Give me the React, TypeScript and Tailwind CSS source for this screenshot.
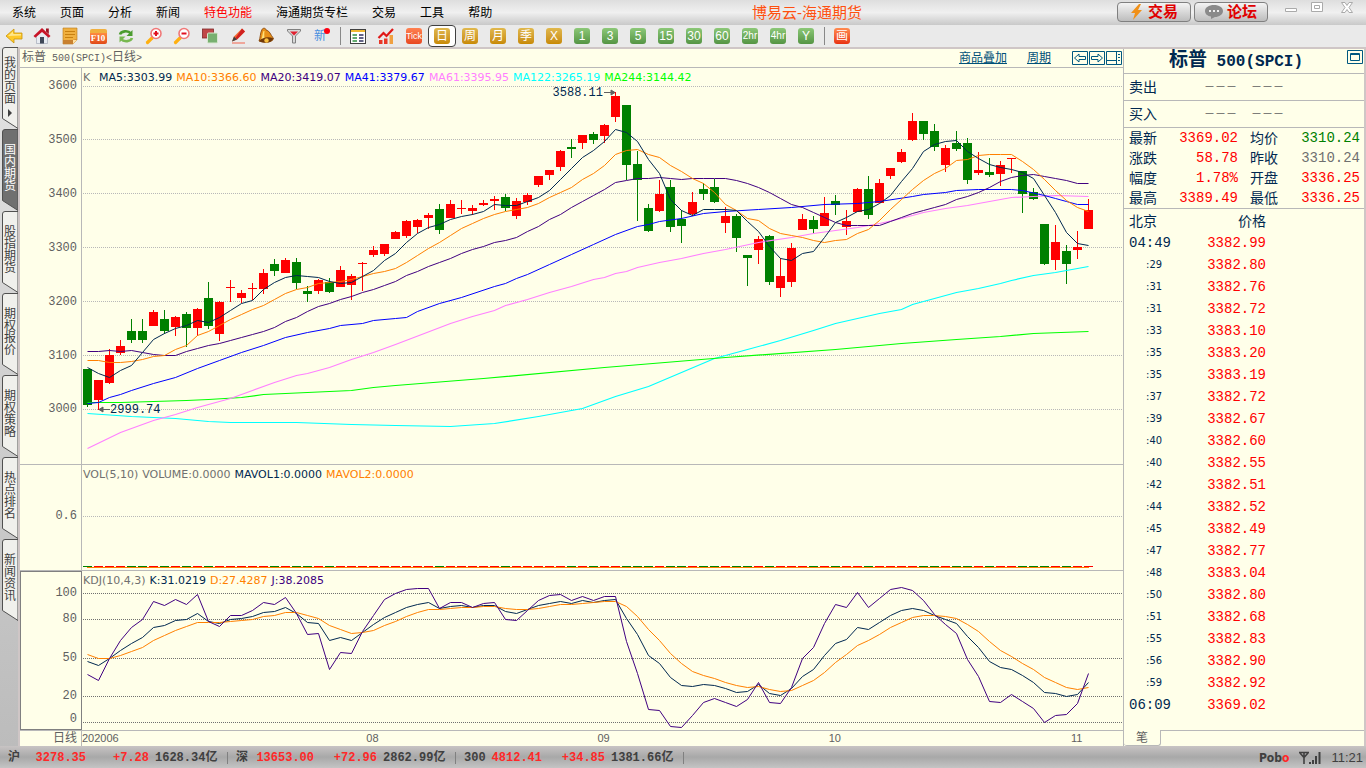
import type { ReactNode } from 'react'
import clsx from 'clsx'

// [up, high, body top, body bottom, low]
type Candle = [number, number, number, number, number]

const candles: Candle[] = [
  [0, 369, 369, 405, 407], [1, 380, 380, 400, 410], [1, 349, 355, 383, 384], [1, 340, 346, 353, 355],
  [0, 319, 331, 340, 343], [0, 319, 331, 340, 343], [1, 310, 312, 326, 326], [0, 310, 319, 331, 334],
  [1, 316, 317, 327, 336], [0, 312, 314, 328, 347], [1, 308, 309, 328, 336], [0, 282, 298, 326, 329],
  [1, 301, 302, 334, 341], [1, 280, 287, 288, 302], [1, 290, 293, 298, 303], [1, 283, 288, 289, 300],
  [1, 269, 273, 289, 294], [0, 259, 264, 271, 276], [1, 258, 260, 273, 273], [0, 258, 262, 283, 289],
  [0, 286, 291, 294, 302], [1, 279, 280, 291, 294], [0, 278, 282, 292, 293], [1, 266, 270, 287, 287],
  [1, 274, 276, 285, 300], [1, 262, 263, 264, 291], [1, 246, 250, 255, 257], [1, 244, 244, 254, 256],
  [1, 231, 232, 239, 239], [1, 220, 221, 236, 238], [1, 219, 220, 227, 233], [1, 213, 215, 218, 229],
  [0, 204, 209, 230, 234], [1, 200, 204, 218, 218], [1, 200, 208, 209, 214], [1, 205, 208, 211, 215],
  [1, 200, 203, 205, 206], [1, 196, 199, 201, 210], [0, 194, 197, 208, 211], [1, 198, 201, 216, 219],
  [1, 193, 195, 202, 205], [1, 176, 176, 185, 187], [1, 170, 170, 175, 180], [1, 150, 151, 167, 171],
  [0, 139, 147, 149, 158], [1, 135, 135, 143, 149], [0, 132, 134, 140, 144], [1, 124, 125, 136, 143],
  [1, 92, 96, 117, 122], [0, 105, 105, 165, 180], [0, 151, 164, 180, 221], [0, 204, 208, 231, 232],
  [1, 180, 194, 211, 212], [0, 180, 187, 227, 232], [0, 210, 219, 226, 243], [1, 192, 202, 214, 216],
  [0, 183, 189, 194, 200], [0, 179, 187, 202, 203], [1, 207, 216, 223, 233], [0, 214, 216, 238, 252],
  [0, 255, 255, 258, 286], [1, 236, 239, 250, 264], [0, 235, 236, 282, 285], [1, 258, 276, 288, 297],
  [1, 243, 248, 282, 287], [1, 214, 219, 230, 230], [0, 216, 220, 229, 233], [1, 197, 213, 226, 226],
  [0, 195, 201, 205, 215], [1, 210, 221, 227, 235], [1, 188, 189, 212, 212], [0, 176, 189, 215, 219],
  [1, 179, 183, 203, 203], [1, 168, 168, 176, 179], [1, 149, 152, 162, 163], [1, 113, 121, 140, 141],
  [0, 121, 121, 134, 140], [0, 124, 131, 147, 151], [1, 145, 148, 165, 172], [0, 131, 143, 149, 151],
  [0, 138, 143, 180, 184], [1, 152, 170, 173, 175], [0, 158, 172, 175, 177], [1, 161, 165, 174, 186],
  [1, 158, 158, 159, 173], [0, 171, 171, 194, 213], [0, 188, 192, 199, 200], [0, 224, 224, 264, 265],
  [1, 225, 242, 260, 270], [0, 245, 251, 264, 284], [1, 231, 247, 250, 259], [1, 199, 210, 229, 229],
]

const ma5 = [
  367, 373, 377, 370, 365, 352, 339, 333, 328, 325, 320, 322, 317, 310, 303, 300, 289, 282, 277, 275, 276, 277, 281,
  283, 282, 276, 270, 260, 253, 242, 233, 227, 224, 219, 216, 214, 211, 204, 205, 205, 201, 197, 190, 179, 168, 157,
  150, 141, 129, 132, 141, 159, 173, 199, 210, 215, 209, 209, 209, 210, 221, 231, 246, 258, 260, 253, 251, 237, 222,
  217, 211, 209, 203, 195, 181, 168, 151, 144, 141, 140, 151, 158, 164, 167, 169, 172, 178, 195, 212, 232, 243, 245,
]
const ma10 = [
  360, 360, 362, 362, 361, 359, 356, 355, 349, 345, 335, 331, 325, 319, 314, 309, 305, 299, 293, 289, 287, 283, 282,
  281, 279, 276, 273, 271, 268, 262, 255, 248, 242, 235, 228, 223, 218, 214, 211, 209, 207, 203, 197, 192, 187, 179,
  173, 165, 154, 150, 149, 154, 157, 165, 171, 178, 183, 192, 204, 210, 218, 220, 228, 233, 235, 237, 240, 242, 240,
  239, 233, 229, 220, 209, 199, 189, 180, 173, 168, 160, 159, 155, 154, 154, 154, 161, 169, 179, 190, 200, 207, 211,
]
const ma20 = [
  351, 351, 350, 351, 350, 352, 354, 355, 355, 351, 348, 345, 343, 340, 337, 334, 331, 327, 321, 317, 311, 306, 303,
  299, 296, 292, 289, 285, 281, 275, 271, 266, 262, 258, 253, 249, 246, 242, 240, 237, 231, 226, 219, 214, 207, 201,
  195, 189, 182, 180, 178, 178, 177, 178, 179, 178, 178, 178, 178, 180, 183, 187, 192, 198, 204, 207, 212, 217, 222,
  225, 225, 225, 225, 221, 217, 213, 210, 207, 204, 199, 196, 192, 187, 181, 177, 175, 174, 176, 178, 180, 183, 183,
]

// the slow averages only keep their turning points: [bar, y]
type Point = [number, number]

const ma41: Point[] = [
  [0, 403], [1, 402], [2, 397], [3, 394], [4, 390], [6, 383], [8, 377], [10, 368], [12, 360], [14, 352], [16, 345],
  [18, 337], [20, 332], [22, 328], [23, 325], [25, 323], [26, 320], [28, 318], [29, 317], [30, 311], [32, 303],
  [34, 297], [37, 286], [38, 283], [39, 278], [40, 274], [42, 264], [44, 254], [46, 244], [48, 234], [50, 226],
  [51, 224], [52, 221], [54, 218], [56, 213], [58, 211], [61, 209], [64, 207], [67, 204], [70, 203], [72, 201],
  [75, 196], [76, 194], [78, 192], [79, 190], [81, 189], [84, 189], [85, 190], [87, 195], [88, 198], [89, 201],
  [90, 204], [91, 204],
]
const ma61: Point[] = [
  [0, 448], [3, 432], [6, 420], [8, 414], [10, 407], [13, 398], [15, 390], [17, 382], [19, 375], [20, 373], [22, 367],
  [24, 359], [26, 352], [28, 344], [33, 323], [35, 316], [37, 310], [38, 305], [40, 299], [42, 292], [44, 286],
  [46, 279], [47, 277], [48, 273], [49, 271], [50, 267], [52, 262], [54, 258], [56, 253], [58, 249], [61, 242],
  [64, 237], [66, 233], [68, 230], [70, 227], [72, 223], [74, 218], [76, 212], [78, 208], [80, 205], [82, 201],
  [84, 197], [86, 196], [88, 195], [91, 196],
]
const ma122: Point[] = [
  [0, 413], [4, 416], [8, 418], [11, 421], [13, 422], [19, 422], [24, 424], [28, 425], [33, 426], [37, 423],
  [41, 416], [45, 408], [48, 396], [51, 386], [54, 372], [57, 358], [60, 349], [63, 340], [66, 330], [68, 323],
  [70, 318], [72, 313], [74, 309], [75, 304], [77, 298], [79, 292], [81, 288], [83, 283], [84, 280], [86, 275],
  [88, 272], [91, 266],
]
const ma244: Point[] = [
  [0, 402], [3, 402], [9, 400], [11, 399], [14, 397], [16, 394], [18, 393], [20, 392], [24, 390], [26, 387],
  [28, 385], [36, 378], [47, 367], [58, 357], [68, 349], [74, 343], [79, 339], [83, 336], [86, 333], [91, 331],
]

const kdjK = [
  661, 665, 658, 650, 643, 637, 627, 625, 620, 619, 613, 621, 623, 619, 618, 616, 612, 611, 607, 613, 622, 623, 640,
  637, 640, 632, 624, 617, 612, 607, 604, 602, 608, 606, 605, 607, 605, 605, 611, 613, 609, 605, 603, 601, 603, 600,
  602, 600, 599, 618, 634, 655, 663, 677, 685, 686, 684, 685, 688, 692, 691, 684, 693, 695, 688, 676, 669, 655, 643,
  639, 627, 629, 622, 615, 610, 608, 610, 615, 619, 623, 636, 647, 661, 667, 669, 675, 682, 692, 693, 696, 694, 682,
]
const kdjD = [
  654, 658, 658, 655, 651, 647, 640, 635, 630, 626, 622, 622, 622, 621, 620, 619, 616, 615, 612, 612, 615, 618, 625,
  629, 633, 632, 630, 625, 621, 616, 612, 609, 609, 608, 607, 607, 606, 606, 608, 609, 609, 608, 606, 604, 604, 603,
  602, 601, 601, 606, 616, 629, 640, 653, 663, 671, 675, 678, 682, 685, 687, 686, 689, 691, 690, 685, 680, 672, 662,
  654, 645, 640, 634, 627, 622, 617, 615, 615, 616, 618, 624, 631, 641, 650, 656, 663, 669, 677, 682, 687, 689, 687,
]
const kdjJ = [
  674, 680, 658, 640, 627, 619, 601, 605, 599, 604, 594, 621, 626, 615, 615, 610, 602, 604, 597, 613, 634, 633, 669,
  652, 653, 631, 615, 599, 593, 589, 588, 588, 608, 602, 602, 607, 603, 602, 619, 620, 610, 600, 595, 594, 600, 596,
  600, 596, 596, 641, 673, 709, 710, 726, 727, 715, 702, 698, 702, 706, 699, 682, 702, 703, 687, 658, 647, 623, 604,
  607, 592, 607, 598, 589, 587, 590, 600, 614, 624, 633, 659, 676, 701, 702, 694, 701, 708, 722, 715, 714, 703, 673,
]

const barX = (i: number) => 87.5 + i * 11
const everyBar = (ys: number[]): Point[] => ys.map((y, i) => [i, y])
const toPoints = (pts: Point[]) => pts.map(([i, y]) => `${barX(i)},${y + 0.5}`).join(' ')

const menu = ['系统', '页面', '分析', '新闻', '特色功能', '海通期货专栏', '交易', '工具', '帮助']
const sideTabs = ['我的页面', '国内期货', '股指期货', '期权报价', '期权策略', '热点排名', '新闻资讯']

const maLegend = [
  { text: 'MA5:3303.99', color: 'text-[#002850]' },
  { text: 'MA10:3366.60', color: 'text-[#ff8000]' },
  { text: 'MA20:3419.07', color: 'text-[#400080]' },
  { text: 'MA41:3379.67', color: 'text-[#0000ff]' },
  { text: 'MA61:3395.95', color: 'text-[#ff80ff]' },
  { text: 'MA122:3265.19', color: 'text-[#00ffff]' },
  { text: 'MA244:3144.42', color: 'text-[#00ff00]' },
]

const periods = [
  { label: '周', tone: 'gold' },
  { label: '月', tone: 'gold' },
  { label: '季', tone: 'gold' },
  { label: 'X', tone: 'gold' },
  { label: '1', tone: 'green' },
  { label: '3', tone: 'green' },
  { label: '5', tone: 'green' },
  { label: '15', tone: 'green' },
  { label: '30', tone: 'green' },
  { label: '60', tone: 'green' },
  { label: '2hr', tone: 'green' },
  { label: '4hr', tone: 'green' },
  { label: 'Y', tone: 'green' },
]

const stats = [
  ['最新', '3369.02', '均价', '3310.24', 'text-[#008000]'],
  ['涨跌', '58.78', '昨收', '3310.24', 'text-[#707070]'],
  ['幅度', '1.78%', '开盘', '3336.25', 'text-[#ff0000]'],
  ['最高', '3389.49', '最低', '3336.25', 'text-[#ff0000]'],
]

const trades = [
  ['04:49', '3382.99'], [':29', '3382.80'], [':31', '3382.76'], [':31', '3382.72'], [':33', '3383.10'],
  [':35', '3383.20'], [':35', '3383.19'], [':37', '3382.72'], [':39', '3382.67'], [':40', '3382.60'],
  [':40', '3382.55'], [':42', '3382.51'], [':44', '3382.52'], [':45', '3382.49'], [':47', '3382.77'],
  [':48', '3383.04'], [':50', '3382.80'], [':51', '3382.68'], [':55', '3382.83'], [':56', '3382.90'],
  [':59', '3382.92'], ['06:09', '3369.02'],
]

const indices = [
  { name: '沪', value: '3278.35', change: '+7.28', volume: '1628.34亿' },
  { name: '深', value: '13653.00', change: '+72.96', volume: '2862.99亿' },
  { name: '300', value: '4812.41', change: '+34.85', volume: '1381.66亿' },
]

/* ---------- toolbar ---------- */

function ToolButton({ label, children }: { label: string; children: ReactNode }) {
  return (
    <button type="button" aria-label={label} className="flex h-[22px] w-7 shrink-0 items-center justify-center">
      {children}
    </button>
  )
}

function ToolIcon({ children }: { children: ReactNode }) {
  return (
    <svg width="18" height="18" viewBox="0 0 18 18" fill="none" aria-hidden="true">
      {children}
    </svg>
  )
}

function Badge({ label, tone }: { label: string; tone: string }) {
  return (
    <span
      className={clsx(
        "flex size-4 items-center justify-center rounded-[3px] font-['Liberation_Sans','Noto_Sans_CJK_SC',sans-serif] leading-4 whitespace-nowrap text-white",
        label.length > 2 ? 'text-[10px]' : 'text-[12px]',
        tone === 'gold' && 'bg-linear-to-b from-[#e0b84c] to-[#c88a00]',
        tone === 'green' && 'bg-linear-to-b from-[#8cc878] to-[#559544]',
        tone === 'red' && 'bg-linear-to-b from-[#ff8a50] to-[#e83010]',
      )}
    >
      {label}
    </span>
  )
}

function Separator() {
  return (
    <span className="flex h-[18px] w-2 shrink-0 justify-center">
      <span className="w-px bg-[#888]" />
    </span>
  )
}

function Toolbar() {
  return (
    <div className="flex h-[22px] shrink-0 items-center bg-[#eaeaea]">
      <ToolButton label="后退">
        <ToolIcon>
          <path d="M1 9 9 2v4h8v6H9v4z" fill="#ffc928" stroke="#c8960a" strokeWidth="0.8" />
          <path d="M3 9 8 4.5V7h8v1.5z" fill="#ffe68a" />
        </ToolIcon>
      </ToolButton>
      <ToolButton label="首页">
        <ToolIcon>
          <path d="M3.500 8v8.500h11V8L9 4z" fill="#e8ecf2" stroke="#98a0b0" strokeWidth="0.6" />
          <path d="M0.500 9 9 1l8.500 8-1.800 1.800L9 5l-6.700 5.800z" fill="#c81428" />
          <path d="M13 1.500h2.800V7L13 4.600z" fill="#a01020" />
          <path d="M7 10h4v6.500H7z" fill="#404858" />
        </ToolIcon>
      </ToolButton>
      <ToolButton label="记事">
        <ToolIcon>
          <path d="M2 1h14v12l-4 4H2z" fill="#f0b040" stroke="#b87818" strokeWidth="0.6" />
          <path d="M2 13h10l4-1-4 5H2z" fill="#c88030" />
          <path d="M4 4.500h10M4 7.500h10M4 10.500h8" stroke="#c88010" />
          <path d="M12 17v-4h4z" fill="#ffe0a0" />
        </ToolIcon>
      </ToolButton>
      <ToolButton label="F10资料">
        <span className="flex h-[15px] w-[17px] items-center justify-center rounded-[2px] border-t-4 border-[#f0b040] bg-linear-to-b from-[#ff8a40] to-[#e04818] font-['Liberation_Serif',serif] text-[9px] leading-[11px] font-bold text-white">
          F10
        </span>
      </ToolButton>
      <ToolButton label="刷新">
        <ToolIcon>
          <path d="M3 7.500C4 4 11 3 14 6.500" stroke="#4c9c30" strokeWidth="2.600" />
          <path d="M15.500 3v6h-6z" fill="#4c9c30" />
          <path d="M15 11c-1 3.500-8 4.500-11 1" stroke="#78b850" strokeWidth="2.600" />
          <path d="M2.500 15.500V9.500h6z" fill="#78b850" />
        </ToolIcon>
      </ToolButton>
      <ToolButton label="放大">
        <ToolIcon>
          <path d="m2.500 15.500 4.500-4.500" stroke="#ffb010" strokeWidth="3.200" strokeLinecap="round" />
          <circle cx="11" cy="6.500" r="5" fill="#fff" stroke="#f07878" strokeWidth="1.600" />
          <path d="M8.500 6.500h5M11 4v5" stroke="#e01020" strokeWidth="2" />
        </ToolIcon>
      </ToolButton>
      <ToolButton label="缩小">
        <ToolIcon>
          <path d="m2.500 15.500 4.500-4.500" stroke="#ffb010" strokeWidth="3.200" strokeLinecap="round" />
          <circle cx="11" cy="6.500" r="5" fill="#fff" stroke="#f07878" strokeWidth="1.600" />
          <path d="M8.500 6.500h5" stroke="#e01020" strokeWidth="2" />
        </ToolIcon>
      </ToolButton>
      <ToolButton label="叠加">
        <ToolIcon>
          <rect x="1.500" y="2" width="11" height="9" fill="#c04848" stroke="#802828" strokeWidth="0.800" />
          <rect x="6.500" y="6" width="10" height="10" rx="1" fill="#78b070" stroke="#d8e8d0" />
        </ToolIcon>
      </ToolButton>
      <ToolButton label="画笔">
        <ToolIcon>
          <path d="M3 14.500 5 9.500l8-8 3 3-8 8z" fill="#f06830" />
          <path d="m13 1.500 3 3-8 8-1.500-1.500z" fill="#d02020" />
          <path d="m3 14.500 2-5 3 3z" fill="#404040" />
          <path d="M3 16h13" stroke="#f09080" strokeWidth="1.500" />
        </ToolIcon>
      </ToolButton>
      <ToolButton label="预警">
        <ToolIcon>
          <path d="M5 2.500C6 .5 9 1 9 3c4 1 4 4 7.500 8.500C16 15 8 16.500 2 14 3.500 11 3 6 5 2.500z" fill="#e89018" stroke="#8a4a10" strokeWidth="0.900" />
          <path d="M6.500 4c-1 2-1 5-2 8l3 .5C7.500 10 7 7 7.500 4z" fill="#ffe078" />
          <path d="M2 14c4-4 10-4.500 14.500-2.500-2 4.500-9 5.500-14.500 2.500z" fill="#703808" />
          <circle cx="9.500" cy="13.500" r="2.200" fill="#f8c040" />
        </ToolIcon>
      </ToolButton>
      <ToolButton label="筛选">
        <ToolIcon>
          <path d="M2.500 2.500h13V4L10.500 9v7h-3V9l-5-5z" fill="#d8d8d8" stroke="#808080" />
          <path d="M5 4.500h8L9 8.500z" fill="#e02030" />
        </ToolIcon>
      </ToolButton>
      <button type="button" className="relative flex h-[22px] w-7 shrink-0 items-center justify-center pr-1 text-[12px] text-[#4a90e0]">
        新
        <span className="absolute top-[3px] right-[6px] size-1.5 rounded-full bg-[#ff0010]" />
      </button>
      <Separator />
      <ToolButton label="报价表">
        <ToolIcon>
          <rect x="1.500" y="2.500" width="15" height="14" fill="#fff" stroke="#404040" />
          <path d="M2 4h14" stroke="#f0b830" strokeWidth="2" />
          <path d="M3.500 8H8M3.500 11H8M3.500 14H8" stroke="#309040" strokeWidth="1.300" />
          <path d="M10 8h4.500M10 11h4.500M10 14h4.500" stroke="#303060" strokeWidth="1.300" />
        </ToolIcon>
      </ToolButton>
      <ToolButton label="分时图">
        <ToolIcon>
          <path d="M2 13h3.500v4H2zM7 11.500h3.500V17H7z" fill="#e83828" />
          <path d="M12.500 8H16v9h-3.500z" fill="#f0a040" />
          <path d="m1.500 11 5-5 3 3 6.500-7" stroke="#e01818" strokeWidth="2.200" />
        </ToolIcon>
      </ToolButton>
      <ToolButton label="Tick">
        <span className="flex size-4 items-center justify-center rounded-[3px] bg-linear-to-b from-[#ff8050] to-[#e84820] text-[9px] leading-4 text-white">
          Tick
        </span>
      </ToolButton>
      <button type="button" aria-pressed="true" className="flex h-[22px] w-7 shrink-0 items-center justify-center rounded-[4px] border border-[#404040] bg-white">
        <Badge label="日" tone="gold" />
      </button>
      {periods.map((p) => (
        <ToolButton key={p.label} label={p.label}>
          <Badge label={p.label} tone={p.tone} />
        </ToolButton>
      ))}
      <Separator />
      <ToolButton label="画线">
        <Badge label="画" tone="red" />
      </ToolButton>
    </div>
  )
}

function TitleBar() {
  return (
    <header className="flex h-[25px] shrink-0 items-center bg-linear-to-b from-[#dedede] via-[#f0f0f0] to-[#c9c9c9]">
      <nav className="flex w-[752px] shrink-0 gap-6 pt-px pl-3">
        {menu.map((item) => (
          <button
            key={item}
            type="button"
            className={clsx('text-[12px] leading-5 whitespace-nowrap', item === '特色功能' ? 'text-[#ff0000]' : 'text-black')}
          >
            {item}
          </button>
        ))}
      </nav>
      <h1 className="text-[15px] leading-6 whitespace-nowrap text-[#ff5010]">博易云-海通期货</h1>
      <div className="ml-auto flex h-full items-start gap-[3px] pt-[2px]">
        <button type="button" className="flex h-5 w-[74px] items-center justify-center gap-1 rounded-[4px] border border-[#808080] bg-linear-to-b from-[#f4f4f4] to-[#bdbdbd] text-[15px] leading-4 font-bold text-[#e00000]">
          <svg width="14" height="16" viewBox="0 0 14 16" aria-hidden="true">
            <path d="M9 0 1 9h4l-2 7 9-10H8l3-6z" fill="#f09018" />
          </svg>
          交易
        </button>
        <button type="button" className="flex h-5 w-[74px] items-center justify-center gap-1 rounded-[4px] border border-[#808080] bg-linear-to-b from-[#f4f4f4] to-[#bdbdbd] text-[15px] leading-4 font-bold text-[#e00000]">
          <svg width="18" height="14" viewBox="0 0 18 14" aria-hidden="true">
            <path d="M9 0c5 0 9 2.500 9 6s-4 6-8 6l-4 2v-2.400C2.500 11 0 9 0 6c0-3.500 4-6 9-6z" fill="#8a8a8a" />
            <path d="M4 5h2v2H4zM8 5h2v2H8zM12 5h2v2h-2z" fill="#eee" />
          </svg>
          论坛
        </button>
        <div className="flex items-center pr-[9px] pl-[6px]">
          <button type="button" aria-label="最小化" className="flex w-7 justify-center">
            <svg width="14" height="12" viewBox="0 0 14 12" fill="#fff" stroke="#aaa" aria-hidden="true">
              <path d="M1.500 6.500h11v3h-11z" />
            </svg>
          </button>
          <button type="button" aria-label="最大化" className="flex w-6 justify-center">
            <svg width="12" height="12" viewBox="0 0 12 12" fill="#fff" stroke="#aaa" aria-hidden="true">
              <path d="M0.500 0.500h11v9h-11z" />
              <path d="M3.500 3.500h5v3h-5z" />
            </svg>
          </button>
          <button type="button" aria-label="关闭" className="flex w-7 justify-end">
            <svg width="20" height="12" viewBox="0 0 20 12" fill="#fff" stroke="#aaa" aria-hidden="true">
              <path d="M4.500 0.500h3.500l2 3 2-3h3.500l-3.500 5 3.500 5H12l-2-3-2 3H4.500l3.500-5z" />
            </svg>
          </button>
        </div>
      </div>
    </header>
  )
}

/* ---------- left tabs ---------- */

function SideTabs() {
  return (
    <nav className="flex w-[18px] shrink-0 flex-col bg-linear-to-b from-[#e4e4e4] to-[#bcbcbc]">
      {sideTabs.map((tab, i) => {
        const active = i === 1
        return (
          <button key={tab} type="button" className="relative flex h-[82px] w-[18px] shrink-0 flex-col items-center pl-[2px]">
            <svg className="absolute inset-0" width="18" height="82" viewBox="0 0 18 82" aria-hidden="true">
              <path
                d="M18 0.500H5Q2.500 0.500 2.500 3V71.500L18 81.500z"
                fill={active ? '#707070' : '#f0f0ec'}
                stroke="#505050"
              />
            </svg>
            <span
              className={clsx(
                'relative w-3 text-[12px] leading-3 break-all',
                active ? 'text-white' : 'text-[#404040]',
                i === 0 ? 'pt-[10px]' : 'pt-[15px]',
              )}
            >
              {tab}
            </span>
            {i === 0 && (
              <svg className="relative mt-1" width="6" height="8" viewBox="0 0 6 8" aria-hidden="true">
                <path d="M1 0v8l4-4z" fill="#404040" />
              </svg>
            )}
          </button>
        )
      })}
    </nav>
  )
}

/* ---------- charts ---------- */

// every label sits on the lower edge of its slice
function Axis({ labels, rest, boxed }: { labels: [string, number][]; rest: number; boxed?: boolean }) {
  return (
    <ul
      className={clsx(
        "flex w-[62px] shrink-0 flex-col border-r border-[#b8b8b8] pr-1 text-right font-['Liberation_Mono',monospace] text-[12px] leading-3 text-[#606060]",
        boxed && 'outline-1 -outline-offset-1 outline-[#808080]',
      )}
    >
      {labels.map(([text, size]) => (
        <li key={text} className="flex min-h-0 basis-0 items-end justify-end" style={{ flexGrow: size }}>
          {text}
        </li>
      ))}
      <li className="basis-0" style={{ flexGrow: rest }} />
    </ul>
  )
}

function GridLines({ ys, color }: { ys: number[]; color: string }) {
  return (
    <g stroke={color} strokeDasharray="1 1" shapeRendering="crispEdges">
      {ys.map((y) => (
        <line key={y} x1="83" x2="1123" y1={y + 0.5} y2={y + 0.5} />
      ))}
    </g>
  )
}

const legendFont = "font-['DejaVu_Sans','Noto_Sans',sans-serif] text-[11px] leading-[14px] whitespace-nowrap"

function PricePane() {
  return (
    <section className="flex min-h-0 grow-[396] basis-0 border-b border-[#b8b8b8]">
      <Axis
        labels={[['3600', 24], ['3500', 54], ['3400', 54], ['3300', 54], ['3200', 54], ['3100', 54], ['3000', 53]]}
        rest={49}
      />
      <div className="relative min-w-0 flex-1">
        <svg className="absolute inset-0 size-full" viewBox="82 68 1041 396" preserveAspectRatio="none" fill="none" aria-label="K线图">
          <GridLines ys={[86, 139, 193, 247, 301, 355, 409]} color="#b8b8b8" />
          <g shapeRendering="crispEdges">
            {candles.map(([up, high, top, bottom, low], i) => (
              <g key={i} fill={up ? '#ff0000' : '#008000'}>
                <rect x={83 + i * 11} y={top} width="9" height={bottom - top} />
                <rect x={87 + i * 11} y={high} width="1" height={low - high} />
              </g>
            ))}
          </g>
          <polyline points={toPoints(ma122)} stroke="#00ffff" strokeWidth="1.200" />
          <polyline points={toPoints(ma244)} stroke="#00ff00" strokeWidth="1.200" />
          <polyline points={toPoints(ma61)} stroke="#ff80ff" strokeWidth="1.200" />
          <polyline points={toPoints(ma41)} stroke="#0000ff" />
          <polyline points={toPoints(everyBar(ma20))} stroke="#400080" />
          <polyline points={toPoints(everyBar(ma10))} stroke="#ff8000" />
          <polyline points={toPoints(everyBar(ma5))} stroke="#002850" />
          <path d="M99 409.500h11M99 409.500l4-2.500v5z" stroke="#606060" fill="#606060" />
          <path d="M604 92.500h11M615 92.500l-4-2.500v5z" stroke="#606060" fill="#606060" />
        </svg>
        <div className={clsx('absolute top-[3px] left-[1px] flex gap-1', legendFont)}>
          <span className="w-3 text-[#707070]">K</span>
          {maLegend.map((m) => (
            <span key={m.text} className={m.color}>
              {m.text}
            </span>
          ))}
        </div>
        <span className="absolute top-[4.5%] left-[45.2%] font-['Liberation_Mono',monospace] text-[12px] leading-[14px] text-[#002850]">
          3588.11
        </span>
        <span className="absolute top-[84.5%] left-[2.7%] font-['Liberation_Mono',monospace] text-[12px] leading-[14px] text-[#002850]">
          2999.74
        </span>
      </div>
    </section>
  )
}

function VolumePane() {
  return (
    <section className="flex min-h-0 grow-[105] basis-0 border-b border-[#b8b8b8]">
      <Axis labels={[['0.6', 57]]} rest={48} />
      <div className="relative min-w-0 flex-1">
        <svg className="absolute inset-0 size-full" viewBox="82 465 1041 105" preserveAspectRatio="none" fill="none" aria-label="成交量">
          <GridLines ys={[516]} color="#b8b8b8" />
          <g shapeRendering="crispEdges">
            {candles.map(([up], i) => (
              <rect key={i} x={83 + i * 11} y="566" width="9" height="1" fill={up ? '#ff0000' : '#008000'} />
            ))}
            <rect x="87" y="567" width="1002" height="1" fill="#ff8000" />
          </g>
        </svg>
        <div className={clsx('absolute top-[3px] left-[1px] flex gap-1', legendFont)}>
          <span className="text-[#707070]">VOL(5,10)</span>
          <span className="text-[#707070]">VOLUME:0.0000</span>
          <span className="text-[#002850]">MAVOL1:0.0000</span>
          <span className="text-[#ff8000]">MAVOL2:0.0000</span>
        </div>
      </div>
    </section>
  )
}

function KdjPane() {
  return (
    <section className="flex min-h-0 grow-[159] basis-0 border-b border-[#b8b8b8]">
      <Axis boxed labels={[['100', 28], ['80', 26], ['50', 39], ['20', 38], ['0', 23]]} rest={5} />
      <div className="relative min-w-0 flex-1">
        <svg className="absolute inset-0 size-full" viewBox="82 571 1041 159" preserveAspectRatio="none" fill="none" aria-label="KDJ">
          <GridLines ys={[593, 619, 658, 696, 722]} color="#707070" />
          <polyline points={toPoints(everyBar(kdjK))} stroke="#002850" />
          <polyline points={toPoints(everyBar(kdjD))} stroke="#ff8000" />
          <polyline points={toPoints(everyBar(kdjJ))} stroke="#400080" />
        </svg>
        <div className={clsx('absolute top-[3px] left-[1px] flex gap-1', legendFont)}>
          <span className="text-[#707070]">KDJ(10,4,3)</span>
          <span className="text-[#002850]">K:31.0219</span>
          <span className="text-[#ff8000]">D:27.4287</span>
          <span className="text-[#400080]">J:38.2085</span>
        </div>
      </div>
    </section>
  )
}

function ChartHeader() {
  return (
    <div className="flex h-[19px] shrink-0 items-center border-b border-[#b8b8b8] pl-[2px]">
      <div className="flex items-baseline leading-[18px] text-[#606060]">
        <span className="text-[12px]">标普</span>
        <span className="font-['Liberation_Mono',monospace] text-[10px] whitespace-pre"> 500(SPCI)&lt;</span>
        <span className="text-[12px]">日线</span>
        <span className="font-['Liberation_Mono',monospace] text-[10px]">&gt;</span>
      </div>
      <div className="ml-auto flex items-center text-[12px] leading-[18px] text-[#005078]">
        <a href="#overlay" className="mr-5 underline">
          商品叠加
        </a>
        <a href="#period" className="mr-[21px] underline">
          周期
        </a>
        <div className="flex gap-px pr-px">
          <button type="button" aria-label="左移">
            <svg width="16" height="14" viewBox="0 0 16 14" fill="none" stroke="#005880" aria-hidden="true">
              <path d="M0.500 0.500h15v13H0.500zM2.500 7 7 3v2.500h6.500v3H7V11z" />
            </svg>
          </button>
          <button type="button" aria-label="右移">
            <svg width="16" height="14" viewBox="0 0 16 14" fill="none" stroke="#005880" aria-hidden="true">
              <path d="M0.500 0.500h15v13H0.500zM13.500 7 9 3v2.500H2.500v3H9V11z" />
            </svg>
          </button>
          <button type="button" aria-label="布局">
            <svg width="16" height="14" viewBox="0 0 16 14" fill="none" stroke="#005880" aria-hidden="true">
              <path d="M0.500 0.500h15v13H0.500zM10.500 0.500v13M0.500 9.500h10M12 3.500h2M12 6.500h2M12 9.500h2" />
            </svg>
          </button>
        </div>
      </div>
    </div>
  )
}

const months: [string, number][] = [
  ['202006', 284],
  ['08', 231],
  ['09', 231],
  ['10', 242],
  ['11', 52],
]

function DateRow() {
  return (
    <div className="flex h-[15px] shrink-0 text-[#606060]">
      <div className="w-[62px] shrink-0 border-r border-[#b8b8b8] pr-1 text-right text-[12px] leading-[15px]">日线</div>
      <div className="flex min-w-0 flex-1 text-[11px] leading-[15px]">
        {months.map(([text, size]) => (
          <span key={text} className="min-w-0 basis-0" style={{ flexGrow: size }}>
            {text}
          </span>
        ))}
      </div>
    </div>
  )
}

/* ---------- quote panel ---------- */

const price = "font-['Liberation_Mono',monospace] text-[14px]"

function QuotePanel() {
  return (
    <aside className="flex w-[241px] shrink-0 flex-col border-l border-[#b8b8b8] text-[14px] text-[#002850]">
      <div className="flex h-[25px] shrink-0 items-center border-b border-[#b8b8b8] pl-[45px]">
        <h2 className="flex items-baseline leading-6 font-bold">
          <span className="text-[19px]">标普</span>
          <span className="font-['Liberation_Mono',monospace] text-[16px] whitespace-pre"> 500(SPCI)</span>
        </h2>
        <button type="button" aria-label="展开" className="mr-px mb-2 ml-auto">
          <svg width="16" height="14" viewBox="0 0 16 14" fill="none" stroke="#005880" aria-hidden="true">
            <path d="M0.500 0.500h15v13H0.500zM3.500 3.500h9v7h-9zM3 4.500h10" />
          </svg>
        </button>
      </div>
      {['卖出', '买入'].map((side) => (
        <div key={side} className="flex h-[27px] shrink-0 items-center border-b border-[#b8b8b8] pl-[5px]">
          <span className="w-[75px]">{side}</span>
          <span className="w-[47px] text-[11px] text-[#606060]">－－－</span>
          <span className="text-[11px] text-[#606060]">－－－</span>
        </div>
      ))}
      <table className="w-full shrink-0 table-fixed border-b border-[#b8b8b8]">
        <tbody>
          {stats.map(([a, av, b, bv, color]) => (
            <tr key={a} className="h-5 leading-5">
              <th scope="row" className="w-[37px] pl-[5px] text-left font-normal">{a}</th>
              <td className={clsx('w-[77px] text-right text-[#ff0000]', price)}>{av}</td>
              <th scope="row" className="w-[44px] pl-3 text-left font-normal">{b}</th>
              <td className={clsx('pr-1 text-right', price, color)}>{bv}</td>
            </tr>
          ))}
        </tbody>
      </table>
      <table className="w-full shrink-0 table-fixed">
        <thead>
          <tr className="h-[23px] leading-[22px]">
            <th className="w-[46px] pl-[5px] text-left font-normal">北京</th>
            <th className="w-[96px] text-right font-normal">价格</th>
            <th />
          </tr>
        </thead>
        <tbody>
          {trades.map(([time, value], i) => (
            <tr key={i} className="h-[22px] leading-[22px]">
              <td
                className={clsx(
                  time.length > 3
                    ? ['pl-[5px]', price]
                    : "pr-2 text-right font-['DejaVu_Sans_Condensed','Noto_Sans',sans-serif] text-[11px]",
                )}
              >
                {time}
              </td>
              <td className={clsx('text-right text-[#ff0000]', price)}>{value}</td>
              <td />
            </tr>
          ))}
        </tbody>
      </table>
      <div className="mt-auto flex h-4 shrink-0">
        <button type="button" className="w-[37px] rounded-b-[3px] border-r border-b border-[#b8b8b8] text-[12px] leading-[14px] text-[#606060]">
          笔
        </button>
        <div className="flex-1 border-t border-[#b8b8b8]" />
      </div>
    </aside>
  )
}

function StatusBar() {
  return (
    <footer className="flex h-[22px] shrink-0 items-center bg-linear-to-b from-[#c8c4c4] via-[#a8a8a8] to-[#c4c4c4] pt-[2px] pl-2 font-['Liberation_Mono','Noto_Sans_CJK_SC',monospace] text-[12px] leading-5 font-bold text-[#404040]">
      {indices.map((item) => (
        <div key={item.name} className="mr-2 flex w-[220px] items-center">
          <span className="flex w-[78px] justify-between">
            {item.name}
            <span className="text-[#ff2828]">{item.value}</span>
          </span>
          <span className="w-[63px] text-right text-[#ff2828]">{item.change}</span>
          <span className="pl-[6px] whitespace-nowrap">{item.volume}</span>
          <span className="ml-auto h-3 w-px bg-[#808080]" />
        </div>
      ))}
      <div className="ml-auto flex items-center pr-[3px] font-['Liberation_Sans',sans-serif]">
        <span className="font-['DejaVu_Sans_Condensed','Noto_Sans',sans-serif] text-[12px]">
          Pob<span className="text-[#ff2828]">o</span>
        </span>
        <svg className="mx-[10px]" width="22" height="14" viewBox="0 0 22 14" fill="none" stroke="#404040" aria-hidden="true">
          <path d="M0 1.500h10M1 2l4 4.500L9 2M5 2v11" strokeWidth="1.600" />
          <path d="M11 11v2M14 9v4M17 5v8M20.500 1v12" strokeWidth="2" />
        </svg>
        <time className="text-[13px] font-normal">11:21</time>
      </div>
    </footer>
  )
}

export default function App() {
  return (
    <div className="flex min-h-screen flex-col overflow-hidden bg-[#ffffe9] font-['Liberation_Sans','Noto_Sans_CJK_SC',sans-serif]">
      <TitleBar />
      <Toolbar />
      <main className="flex flex-1">
        <SideTabs />
        <div className="flex min-w-0 flex-1 border-x-2 border-t-2 border-[#cfc6c6]">
          <div className="flex min-w-0 flex-1 flex-col">
            <ChartHeader />
            <PricePane />
            <VolumePane />
            <KdjPane />
            <DateRow />
          </div>
          <QuotePanel />
        </div>
      </main>
      <StatusBar />
    </div>
  )
}
